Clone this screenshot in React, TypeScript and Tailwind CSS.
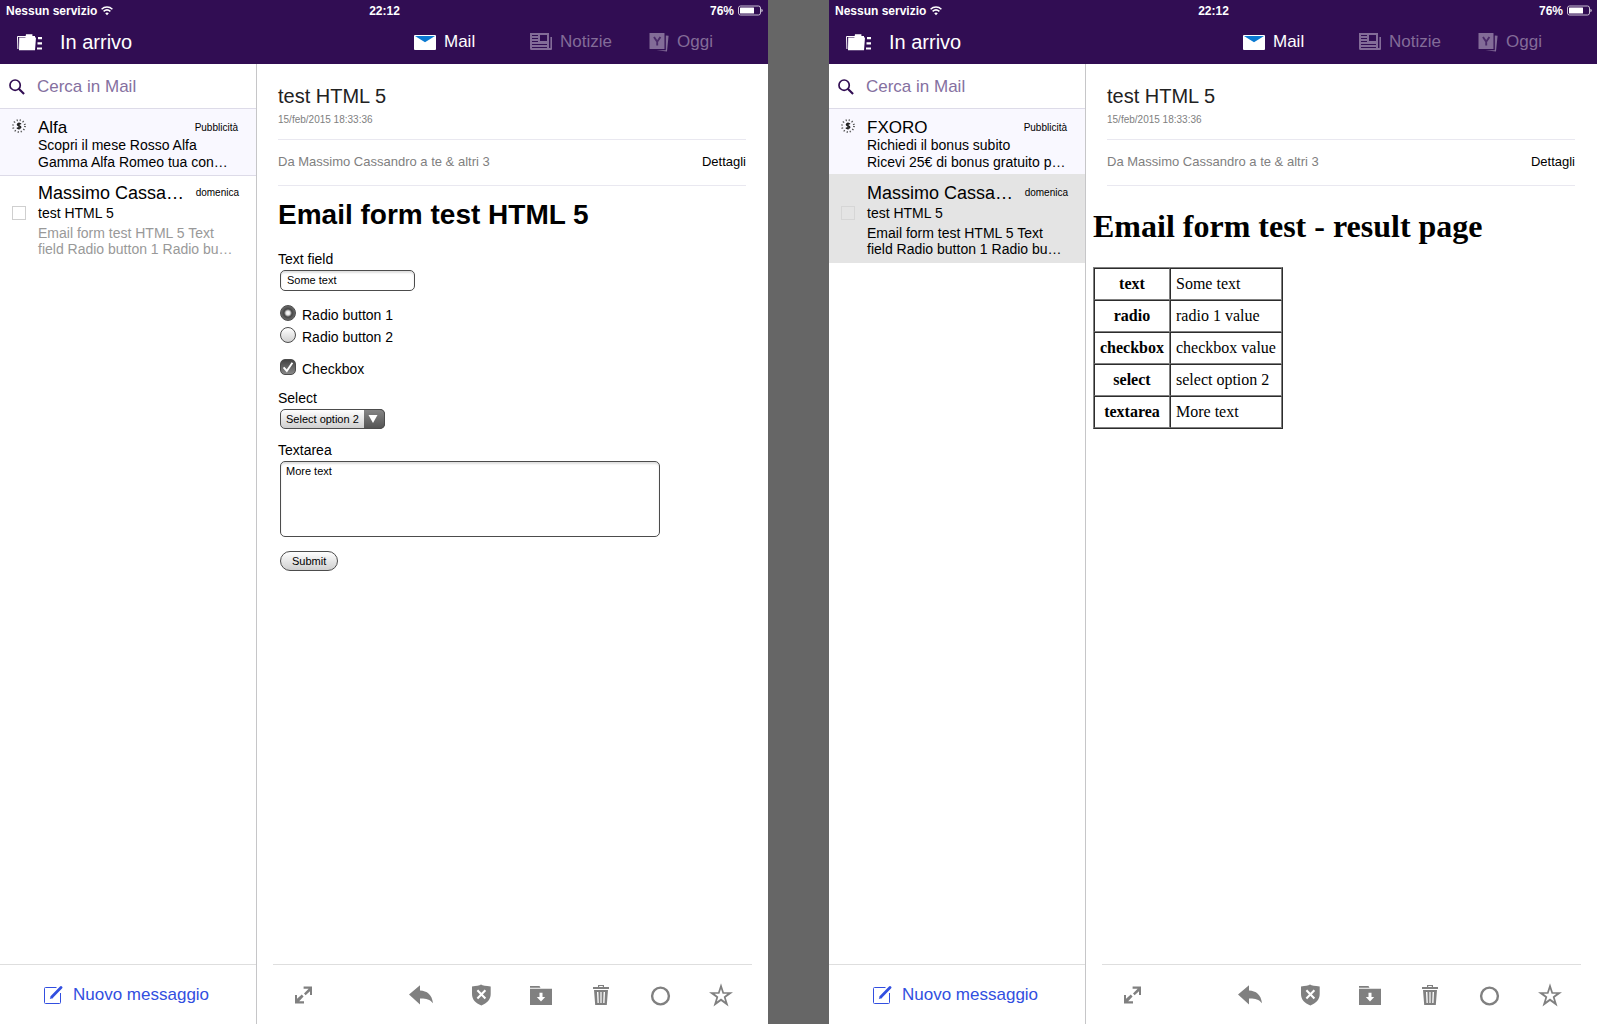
import React, { useId } from 'react';

type Ad = { name: string; lines: [string, string] };

function WifiIcon() {
  return (
    <svg className="h-3 w-3" viewBox="0 0 12 12" fill="none" stroke="#fff" aria-hidden="true">
      <path d="M0.6 4.2C3.6 1.3 8.4 1.3 11.4 4.2" strokeWidth="1.5" />
      <path d="M2.6 6.4C4.6 4.6 7.4 4.6 9.4 6.4" strokeWidth="1.5" />
      <path d="M6 10.2L4.2 8.2C5.2 7.4 6.8 7.4 7.8 8.2Z" fill="#fff" stroke="none" />
    </svg>
  );
}

function BatteryIcon() {
  return (
    <svg className="h-3 w-[25px]" viewBox="0 0 25 12" aria-hidden="true">
      <rect x="0.5" y="1" width="22" height="9" rx="2" fill="none" stroke="#c9bfd4" />
      <rect x="2" y="2.5" width="14" height="6" rx="0.5" fill="#fff" />
      <path d="M23.5 3.7C25 4.3 25 6.7 23.5 7.3Z" fill="#fff" />
    </svg>
  );
}

function FoldersIcon() {
  return (
    <svg className="h-[17px] w-[25px]" viewBox="0 0 25 17" fill="#fff" aria-hidden="true">
      <path d="M0.9 15L0.5 2.5H9" fill="none" stroke="#fff" />
      <path d="M9 0.3H15.4V2H18V3.6H19L18 16.2H2L2.2 3.6H8.4Z" />
      <path d="M21 3h4v2.2h-4zM20.5 8.2h4.5v2.2h-4.5zM20 13.4h5v2.2h-5z" />
    </svg>
  );
}

function EnvelopeIcon() {
  return (
    <svg className="h-[15px] w-[22px]" viewBox="0 0 22 15" aria-hidden="true">
      <rect width="22" height="15" rx="1" fill="#fff" />
      <path d="M1 1H21L11 7.2Z" fill="#0a7ad1" />
    </svg>
  );
}

function NewsIcon() {
  return (
    <svg className="h-[18px] w-[22px]" viewBox="0 0 22 18" fill="#836c98" aria-hidden="true">
      <path
        fillRule="evenodd"
        d="M0 0H19V15H20.4V4H22V16Q22 17 21 17H1.5Q0 17 0 15.5ZM2 2V3H8V2ZM10 2V8H17V2ZM2 5V6H8V5ZM2 8V9H8V8ZM2 11V12H17V11ZM2 14V15H17V14Z"
      />
    </svg>
  );
}

function TodayIcon() {
  return (
    <svg className="h-5 w-5" viewBox="0 0 20 20" fill="#836c98" aria-hidden="true">
      <path d="M0.5 1H15Q15.5 1 15.5 1.5V17H1Q0.5 17 0.5 16.5Z" />
      <path d="M16.8 3.4L19.6 3.8L18 19.6L7.5 18.2H16.8Z" />
      <path d="M5 5L8.2 9.8V13.4M11.4 5L8.2 9.8" fill="none" stroke="#4b2a69" strokeWidth="1.9" />
    </svg>
  );
}

function SearchIcon() {
  return (
    <svg className="h-[18px] w-[18px]" viewBox="0 0 18 18" fill="none" stroke="#310d53" aria-hidden="true">
      <circle cx="6.9" cy="6.9" r="5.8" strokeWidth="1.9" />
      <path d="M11 11L17 17" strokeWidth="2.4" />
    </svg>
  );
}

function SponsorIcon() {
  return (
    <svg className="h-[14px] w-[14px]" viewBox="0 0 14 14" fill="none" stroke="#222" aria-hidden="true">
      <circle cx="7" cy="7" r="6" stroke="#555" strokeWidth="1.8" strokeDasharray="1.15 1.99" />
      <path d="M8.9 5.2C8.4 4.2 5.4 4.2 5.4 5.7C5.4 7.2 8.8 6.7 8.8 8.3C8.8 9.8 5.5 9.7 5 8.6M7 3.4V10.6" strokeWidth="1.4" />
    </svg>
  );
}

function ComposeIcon() {
  return (
    <svg className="h-[18px] w-[19px]" viewBox="0 0 19 18" fill="none" stroke="#324fe0" aria-hidden="true">
      <path d="M12.5 1.5H1.5Q0.5 1.5 0.5 2.5V16.5Q0.5 17.5 1.5 17.5H15.5Q16.5 17.5 16.5 16.5V7" />
      <path d="M8 10.7L17 1.6" strokeWidth="2.8" strokeLinecap="round" />
      <path d="M5.8 13L7 9.8L9.4 12Z" fill="#324fe0" stroke="none" />
    </svg>
  );
}

function ExpandIcon() {
  return (
    <svg className="h-[18px] w-[18px]" viewBox="0 0 18 18" fill="#808080" aria-hidden="true">
      <path d="M8.6 0.6H17V9H15V5.2L10.6 9.2L9 7.6L13.6 2.8H8.6Z" />
      <path d="M0 9H2V12.8L6.8 8.6L8.6 10.4L4.2 15.2H9V17.4H0Z" />
    </svg>
  );
}

function ReplyIcon() {
  return (
    <svg className="h-6 w-6" viewBox="0 0 24 24" fill="#808080" aria-hidden="true">
      <path d="M0 11.6L11 2.2V7.5C18 7.8 23 11.5 24 20.2C20.5 16 17 15.4 11 15.5V21.4Z" />
    </svg>
  );
}

function ShieldIcon() {
  return (
    <svg className="h-6 w-6" viewBox="0 0 24 24" aria-hidden="true">
      <path d="M12 1.6Q14.5 3.2 21.7 3.4V11C21.7 16.5 18 20 12.4 22.6C6.5 20 3 16.5 3 11V3.4Q9.5 3.2 12 1.6Z" fill="#808080" />
      <path d="M8.4 7.2L16.4 15.4M16.4 7.2L8.4 15.4" stroke="#fff" strokeWidth="2.1" />
    </svg>
  );
}

function ArchiveIcon() {
  return (
    <svg className="h-6 w-6" viewBox="0 0 24 24" aria-hidden="true">
      <path d="M1 3H10.5L11.5 4.7H1ZM1 5.8H23V22H1Z" fill="#808080" />
      <path d="M10.5 9.8H13.5V14H16.2L12 18.6L7.8 14H10.5Z" fill="#fff" />
    </svg>
  );
}

function TrashIcon() {
  return (
    <svg className="h-6 w-6" viewBox="0 0 24 24" fill="#808080" aria-hidden="true">
      <path fillRule="evenodd" d="M9 2H15V4H20V6H4V4H9ZM10.2 3V4H13.8V3Z" />
      <path fillRule="evenodd" d="M5 7H19L17.8 22H6.2ZM8 9L8.5 20H9.8L9.4 9ZM11.4 9V20H12.6V9ZM14.6 9L14.2 20H15.5L16 9Z" />
    </svg>
  );
}

function CircleIcon() {
  return (
    <svg className="h-6 w-6" viewBox="0 0 24 24" aria-hidden="true">
      <circle cx="11.5" cy="13" r="8.4" fill="none" stroke="#808080" strokeWidth="2.4" />
    </svg>
  );
}

function StarIcon() {
  return (
    <svg className="h-6 w-6" viewBox="0 0 24 24" fill="#808080" aria-hidden="true">
      <path
        fillRule="evenodd"
        d="M12 0.2L14.9 9.2H24L16.7 14.5L19.5 23.6L12 18L4.5 23.6L7.3 14.5L0 9.2H9.1ZM12 6L10.4 10.8H5.6L9.3 13.7L7.9 18.6L12 15.6L16.1 18.6L14.7 13.7L18.4 10.8H13.6Z"
      />
    </svg>
  );
}

const actions = [
  { label: 'Rispondi', icon: <ReplyIcon /> },
  { label: 'Spam', icon: <ShieldIcon /> },
  { label: 'Sposta', icon: <ArchiveIcon /> },
  { label: 'Elimina', icon: <TrashIcon /> },
  { label: 'Segna come da leggere', icon: <CircleIcon /> },
  { label: 'Speciale', icon: <StarIcon /> },
];

function TopBar() {
  return (
    <header className="flex h-16 flex-col bg-[#310d53] text-white">
      <div className="grid h-[22px] grid-cols-3 items-center pr-[5px] pl-1.5 text-xs font-bold">
        <div className="flex items-center gap-1">
          <span>Nessun servizio</span>
          <WifiIcon />
        </div>
        <div className="text-center">22:12</div>
        <div className="flex items-center justify-end gap-1">
          <span>76%</span>
          <BatteryIcon />
        </div>
      </div>
      <div className="flex h-10 items-center pl-[17px]">
        <button type="button" className="flex items-center gap-[18px] text-xl">
          <FoldersIcon />
          <span>In arrivo</span>
        </button>
        <nav className="ml-auto flex text-[17px]">
          <button type="button" className="flex w-[116px] items-center gap-2">
            <EnvelopeIcon />
            Mail
          </button>
          <button type="button" className="flex w-[119px] items-center gap-2 text-[#836c98]">
            <NewsIcon />
            Notizie
          </button>
          <button type="button" className="flex w-[119px] items-center gap-2 text-[#836c98]">
            <TodayIcon />
            Oggi
          </button>
        </nav>
      </div>
    </header>
  );
}

function Sidebar({ ad, selected }: { ad: Ad; selected: boolean }) {
  return (
    <aside className="flex w-[257px] shrink-0 flex-col border-r border-[#c6c6c8]">
      <label className="flex h-[45px] items-center gap-3 border-b border-[#dddbe8] pt-px pl-[9px]">
        <SearchIcon />
        <input
          type="search"
          aria-label="Cerca in Mail"
          placeholder="Cerca in Mail"
          className="w-full min-w-0 text-[17px] outline-none placeholder:text-[#85709f]"
        />
      </label>

      <article
        className={
          selected
            ? 'flex bg-[#f9f8ff] pt-[9px] pr-[18px] pb-[3px] pl-3'
            : 'flex border-b border-[#dddbe8] bg-[#f9f8ff] pt-[9px] pr-[18px] pb-1 pl-3'
        }
      >
        <div className="w-[26px] shrink-0 pt-px">
          <SponsorIcon />
        </div>
        <div className="min-w-0 flex-1 whitespace-nowrap">
          <div className="flex items-center justify-between">
            <h2 className="text-[17px] leading-[19px]">{ad.name}</h2>
            <span className="text-[10px] leading-[19px]">Pubblicità</span>
          </div>
          <p className="text-sm leading-[17px]">{ad.lines[0]}</p>
          <p className="text-sm leading-[17px]">{ad.lines[1]}</p>
        </div>
      </article>

      <article
        className={
          selected
            ? 'flex items-center bg-[#e4e4e4] pt-[9px] pr-[17px] pb-1.5 pl-3'
            : 'flex items-center pt-[7px] pr-[17px] pb-1.5 pl-3'
        }
      >
        <div className="flex w-[26px] shrink-0 pb-3.5">
          <input
            type="checkbox"
            aria-label="Seleziona messaggio di Massimo Cassandro"
            className={
              selected
                ? 'h-[14px] w-[14px] appearance-none border border-[#d6d6d6]'
                : 'h-[14px] w-[14px] appearance-none border border-[#cfcfcf]'
            }
          />
        </div>
        <div className="min-w-0 flex-1 whitespace-nowrap">
          <div className="flex items-center justify-between">
            <h2 className="text-lg leading-5">Massimo Cassa…</h2>
            <span className="text-[10px] leading-5">domenica</span>
          </div>
          <p className="text-sm leading-5">test HTML 5</p>
          <p className={selected ? 'mt-0.5 text-sm leading-4' : 'mt-0.5 text-sm leading-4 text-[#999]'}>
            Email form test HTML 5 Text
            <br />
            field Radio button 1 Radio bu…
          </p>
        </div>
      </article>

      <footer className="mt-auto flex h-[60px] items-center border-t border-[#dedede] pl-11">
        <button type="button" className="flex items-center gap-2.5 text-[17px] text-[#324fe0]">
          <ComposeIcon />
          Nuovo messaggio
        </button>
      </footer>
    </aside>
  );
}

function FormMessage() {
  const id = useId();
  return (
    <form className="mx-[21px] pt-[13px] text-sm leading-4" onSubmit={(e) => e.preventDefault()}>
      <h1 className="text-[28px] leading-8 font-bold">Email form test HTML 5</h1>

      <label htmlFor={id + 'text'} className="mt-5 block">Text field</label>
      <input
        id={id + 'text'}
        type="text"
        defaultValue="Some text"
        className="mt-[3px] ml-0.5 block h-[21px] w-[135px] rounded-[5px] border border-[#4c4c4c] px-1.5 pb-px text-[11px] shadow-[inset_0_2px_2px_#e0e0e0]"
      />

      <div className="mt-3.5 ml-0.5 flex flex-col gap-1.5">
        <label className="flex h-4 items-center gap-1.5">
          <input
            type="radio"
            name={id + 'radio'}
            defaultChecked
            className="h-4 w-4 appearance-none rounded-full border border-[#4c4c4c] bg-linear-to-b from-white to-[#d0d0d0] checked:bg-[radial-gradient(circle,#fff_0,#e4e4e4_2px,#444_4px,#777_8px)]"
          />
          <span className="pt-1">Radio button 1</span>
        </label>
        <label className="flex h-4 items-center gap-1.5">
          <input
            type="radio"
            name={id + 'radio'}
            className="h-4 w-4 appearance-none rounded-full border border-[#4c4c4c] bg-linear-to-b from-white to-[#d0d0d0] checked:bg-[radial-gradient(circle,#fff_0,#e4e4e4_2px,#444_4px,#777_8px)]"
          />
          <span className="pt-1">Radio button 2</span>
        </label>
      </div>

      <label className="mt-4 ml-0.5 flex h-4 items-center gap-1.5">
        <span className="relative h-4 w-4">
          <input
            type="checkbox"
            defaultChecked
            className="peer block h-4 w-4 appearance-none rounded-[5px] border border-[#4c4c4c] bg-linear-to-b from-white to-[#d0d0d0] checked:from-[#444] checked:to-[#888]"
          />
          <svg className="pointer-events-none absolute inset-0 hidden h-4 w-4 peer-checked:block" viewBox="0 0 16 16" aria-hidden="true">
            <path d="M3.6 8.4L6.8 12L12.4 3.8" fill="none" stroke="#fff" strokeWidth="1.9" />
          </svg>
        </span>
        <span className="pt-1">Checkbox</span>
      </label>

      <label htmlFor={id + 'select'} className="mt-[15px] block">Select</label>
      <div className="relative mt-[3px] ml-0.5 h-5 w-[105px]">
        <select
          id={id + 'select'}
          defaultValue="2"
          className="block h-5 w-full appearance-none rounded-[5px] border border-[#4c4c4c] bg-linear-to-b from-white to-[#cfcfcf] pl-[5px] text-[11px]"
        >
          <option value="1">Select option 1</option>
          <option value="2">Select option 2</option>
        </select>
        <span className="pointer-events-none absolute inset-y-0 right-0 flex w-[21px] items-center justify-center rounded-r-[5px] border border-l-0 border-[#4c4c4c] bg-linear-to-b from-[#858585] to-[#555] pr-0.5">
          <svg className="h-2 w-2.5" viewBox="0 0 10 8" aria-hidden="true">
            <path d="M0.5 0H9.5L5 8Z" fill="#fff" />
          </svg>
        </span>
      </div>

      <label htmlFor={id + 'area'} className="mt-[13px] block">Textarea</label>
      <textarea
        id={id + 'area'}
        defaultValue="More text"
        className="mt-[3px] ml-0.5 block h-[76px] w-[380px] max-w-full resize-none rounded-[5px] border border-[#4c4c4c] px-[5px] py-[3px] text-[11px] leading-[13px] shadow-[inset_0_2px_2px_#e0e0e0]"
      />
      <button
        type="submit"
        className="mt-3.5 ml-0.5 h-5 rounded-full border border-[#4c4c4c] bg-linear-to-b from-white to-[#cfcfcf] px-[11px] text-[11px]"
      >
        Submit
      </button>
    </form>
  );
}

const results = [
  ['text', 'Some text'],
  ['radio', 'radio 1 value'],
  ['checkbox', 'checkbox value'],
  ['select', 'select option 2'],
  ['textarea', 'More text'],
];

function ResultMessage() {
  return (
    <div className="mx-[7px] pt-[22px] font-['Liberation_Serif',serif]">
      <h1 className="text-[32px] leading-9 font-bold">Email form test - result page</h1>
      <table className="mt-[23px] border-separate border-spacing-0 border border-t-[#808080] border-r-[#2c2c2c] border-b-[#2c2c2c] border-l-[#808080] text-base leading-5">
        <tbody>
          {results.map(([name, value]) => (
            <tr key={name}>
              <th scope="row" className="border border-t-[#2c2c2c] border-r-[#808080] border-b-[#808080] border-l-[#2c2c2c] p-[5px] text-center font-bold">
                {name}
              </th>
              <td className="border border-t-[#2c2c2c] border-r-[#808080] border-b-[#808080] border-l-[#2c2c2c] p-[5px]">
                {value}
              </td>
            </tr>
          ))}
        </tbody>
      </table>
    </div>
  );
}

function MailScreen({ ad, selected, children }: { ad: Ad; selected: boolean; children: React.ReactNode }) {
  return (
    <section className="flex min-h-screen min-w-0 flex-col bg-white text-black">
      <TopBar />
      <div className="flex flex-1">
        <Sidebar ad={ad} selected={selected} />
        <main className="flex min-w-0 flex-1 flex-col">
          <div className="mr-[22px] ml-[21px] border-b border-[#e9e8f0] pt-5 pb-3">
            <h2 className="text-xl leading-6 text-[#222]">test HTML 5</h2>
            <p className="mt-1 text-[10px] leading-[15px] text-[#808080]">15/feb/2015 18:33:36</p>
          </div>
          <div className="mr-[22px] ml-[21px] flex h-[46px] items-center justify-between border-b border-[#e9e8f0] pb-0.5 text-[13px]">
            <span className="text-[#808080]">Da Massimo Cassandro a te &amp; altri 3</span>
            <button type="button">Dettagli</button>
          </div>
          {children}
          <footer className="mx-4 mt-auto flex h-[60px] items-center justify-between border-t border-[#dedede] pr-[19px] pl-[22px]">
            <button type="button" aria-label="Espandi">
              <ExpandIcon />
            </button>
            <div className="flex gap-9">
              {actions.map((a) => (
                <button key={a.label} type="button" aria-label={a.label}>
                  {a.icon}
                </button>
              ))}
            </div>
          </footer>
        </main>
      </div>
    </section>
  );
}

export default function App() {
  return (
    <div className="grid grid-cols-[1fr_61px_1fr] bg-[#666] font-['Liberation_Sans',Arial,sans-serif]">
      <MailScreen ad={{ name: 'Alfa', lines: ['Scopri il mese Rosso Alfa', 'Gamma Alfa Romeo tua con…'] }} selected={false}>
        <FormMessage />
      </MailScreen>
      <div />
      <MailScreen ad={{ name: 'FXORO', lines: ['Richiedi il bonus subito', 'Ricevi 25€ di bonus gratuito p…'] }} selected>
        <ResultMessage />
      </MailScreen>
    </div>
  );
}
